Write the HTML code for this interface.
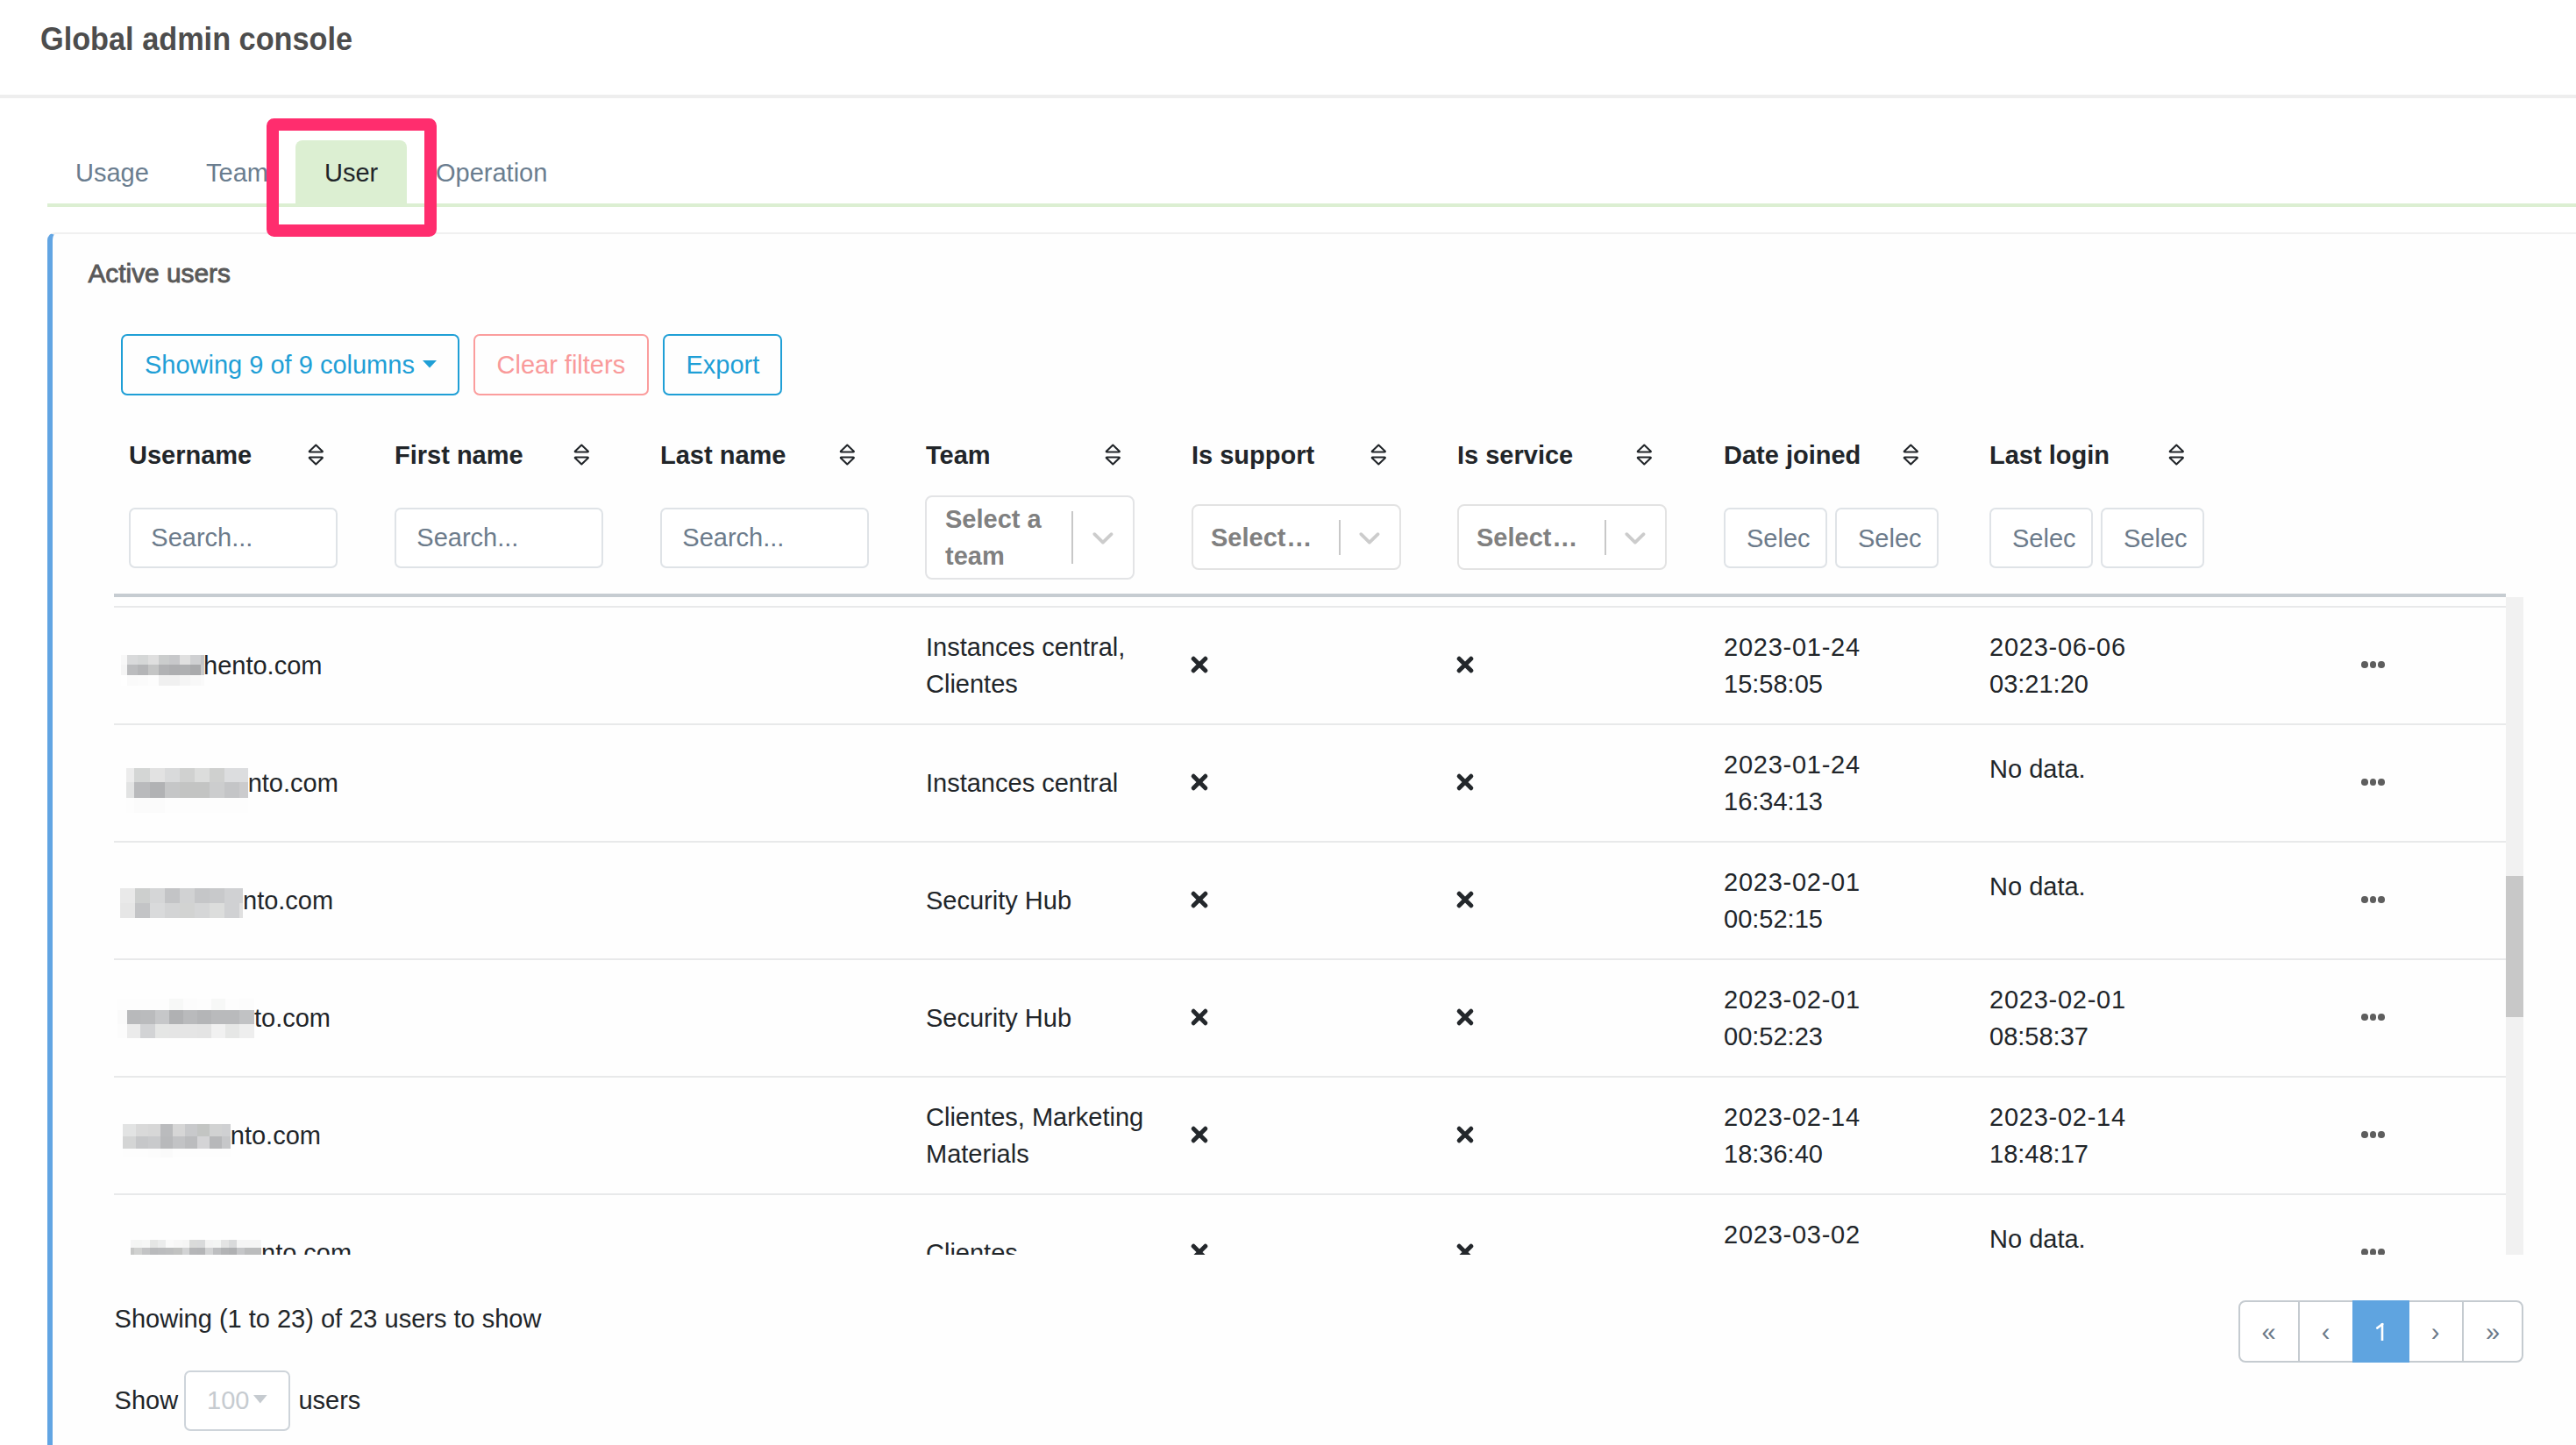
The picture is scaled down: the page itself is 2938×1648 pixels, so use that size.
<!DOCTYPE html>
<html><head><meta charset="utf-8"><title>Global admin console</title>
<style>
html,body{margin:0;padding:0;background:#ffffff;}
body{width:2938px;height:1648px;position:relative;overflow:hidden;font-family:"Liberation Sans", sans-serif;}
.t{position:absolute;white-space:nowrap;}
.r{position:absolute;}
</style></head><body>
<div class="t" style="left:46px;top:21.96px;font-size:37.6px;line-height:44px;color:#4d4d4d;font-weight:700;transform:scaleX(0.912);transform-origin:0 0">Global admin console</div>
<div class="r" style="left:0px;top:108px;width:2938px;height:4px;background:#eeeeee"></div>
<div class="r" style="left:337px;top:160px;width:127px;height:73px;background:#dcefd2;border-radius:8px 8px 0 0"></div>
<div class="r" style="left:54px;top:232px;width:2884px;height:4px;background:#dcefd2"></div>
<div class="t" style="left:86px;top:176.15px;font-size:29px;line-height:42px;color:#6a7d8f;font-weight:400;">Usage</div>
<div class="t" style="left:235px;top:176.15px;font-size:29px;line-height:42px;color:#6a7d8f;font-weight:400;">Team</div>
<div class="t" style="left:370px;top:176.15px;font-size:29px;line-height:42px;color:#212529;font-weight:400;">User</div>
<div class="t" style="left:497px;top:176.15px;font-size:29px;line-height:42px;color:#6a7d8f;font-weight:400;">Operation</div>
<div class="r" style="left:54px;top:265px;width:2884px;height:1383px;background:#fefefe;border-top:2px solid #f0f0f0;border-left:6px solid #62a5e3;border-top-left-radius:9px;box-sizing:border-box"></div>
<div class="t" style="left:100.5px;top:289.57px;font-size:29.8px;line-height:43px;color:#595959;font-weight:400;-webkit-text-stroke:0.9px #595959">Active users</div>
<div class="r" style="left:138px;top:381px;width:386px;height:70px;border:2px solid #1f9fd6;border-radius:7px;box-sizing:border-box"></div>
<div class="t" style="left:165px;top:395.15px;font-size:29px;line-height:42px;color:#1f9fd6;font-weight:400;">Showing 9 of 9 columns</div>
<svg class="r" style="left:482px;top:410.5px" width="16" height="9"><polygon points="0,0 16,0 8,8.5" fill="#1f9fd6"/></svg>
<div class="r" style="left:540px;top:381px;width:199.5px;height:70px;border:2px solid #fb9d9d;border-radius:7px;box-sizing:border-box"></div>
<div class="t" style="left:566.5px;top:395.15px;font-size:29px;line-height:42px;color:#f99a9a;font-weight:400;">Clear filters</div>
<div class="r" style="left:756px;top:381px;width:136px;height:70px;border:2px solid #1f9fd6;border-radius:7px;box-sizing:border-box"></div>
<div class="t" style="left:782.5px;top:395.15px;font-size:29px;line-height:42px;color:#1f9fd6;font-weight:400;">Export</div>
<div class="t" style="left:147px;top:498.45px;font-size:29px;line-height:42px;color:#212529;font-weight:700;">Username</div>
<svg class="r" style="left:351px;top:505px" width="20" height="26" viewBox="0 0 20 26"><path d="M9.3,2.6 L2.0,9.4 Q1.3,10.5 2.6,10.5 L16.0,10.5 Q17.3,10.5 16.6,9.4 Z" fill="none" stroke="#212529" stroke-width="2.1" stroke-linejoin="round"/><path d="M9.3,24.4 L2.0,17.6 Q1.3,16.5 2.6,16.5 L16.0,16.5 Q17.3,16.5 16.6,17.6 Z" fill="none" stroke="#212529" stroke-width="2.1" stroke-linejoin="round"/></svg>
<div class="t" style="left:450px;top:498.45px;font-size:29px;line-height:42px;color:#212529;font-weight:700;">First name</div>
<svg class="r" style="left:654px;top:505px" width="20" height="26" viewBox="0 0 20 26"><path d="M9.3,2.6 L2.0,9.4 Q1.3,10.5 2.6,10.5 L16.0,10.5 Q17.3,10.5 16.6,9.4 Z" fill="none" stroke="#212529" stroke-width="2.1" stroke-linejoin="round"/><path d="M9.3,24.4 L2.0,17.6 Q1.3,16.5 2.6,16.5 L16.0,16.5 Q17.3,16.5 16.6,17.6 Z" fill="none" stroke="#212529" stroke-width="2.1" stroke-linejoin="round"/></svg>
<div class="t" style="left:753px;top:498.45px;font-size:29px;line-height:42px;color:#212529;font-weight:700;">Last name</div>
<svg class="r" style="left:957px;top:505px" width="20" height="26" viewBox="0 0 20 26"><path d="M9.3,2.6 L2.0,9.4 Q1.3,10.5 2.6,10.5 L16.0,10.5 Q17.3,10.5 16.6,9.4 Z" fill="none" stroke="#212529" stroke-width="2.1" stroke-linejoin="round"/><path d="M9.3,24.4 L2.0,17.6 Q1.3,16.5 2.6,16.5 L16.0,16.5 Q17.3,16.5 16.6,17.6 Z" fill="none" stroke="#212529" stroke-width="2.1" stroke-linejoin="round"/></svg>
<div class="t" style="left:1056px;top:498.45px;font-size:29px;line-height:42px;color:#212529;font-weight:700;">Team</div>
<svg class="r" style="left:1260px;top:505px" width="20" height="26" viewBox="0 0 20 26"><path d="M9.3,2.6 L2.0,9.4 Q1.3,10.5 2.6,10.5 L16.0,10.5 Q17.3,10.5 16.6,9.4 Z" fill="none" stroke="#212529" stroke-width="2.1" stroke-linejoin="round"/><path d="M9.3,24.4 L2.0,17.6 Q1.3,16.5 2.6,16.5 L16.0,16.5 Q17.3,16.5 16.6,17.6 Z" fill="none" stroke="#212529" stroke-width="2.1" stroke-linejoin="round"/></svg>
<div class="t" style="left:1359px;top:498.45px;font-size:29px;line-height:42px;color:#212529;font-weight:700;">Is support</div>
<svg class="r" style="left:1563px;top:505px" width="20" height="26" viewBox="0 0 20 26"><path d="M9.3,2.6 L2.0,9.4 Q1.3,10.5 2.6,10.5 L16.0,10.5 Q17.3,10.5 16.6,9.4 Z" fill="none" stroke="#212529" stroke-width="2.1" stroke-linejoin="round"/><path d="M9.3,24.4 L2.0,17.6 Q1.3,16.5 2.6,16.5 L16.0,16.5 Q17.3,16.5 16.6,17.6 Z" fill="none" stroke="#212529" stroke-width="2.1" stroke-linejoin="round"/></svg>
<div class="t" style="left:1662px;top:498.45px;font-size:29px;line-height:42px;color:#212529;font-weight:700;">Is service</div>
<svg class="r" style="left:1866px;top:505px" width="20" height="26" viewBox="0 0 20 26"><path d="M9.3,2.6 L2.0,9.4 Q1.3,10.5 2.6,10.5 L16.0,10.5 Q17.3,10.5 16.6,9.4 Z" fill="none" stroke="#212529" stroke-width="2.1" stroke-linejoin="round"/><path d="M9.3,24.4 L2.0,17.6 Q1.3,16.5 2.6,16.5 L16.0,16.5 Q17.3,16.5 16.6,17.6 Z" fill="none" stroke="#212529" stroke-width="2.1" stroke-linejoin="round"/></svg>
<div class="t" style="left:1966px;top:498.45px;font-size:29px;line-height:42px;color:#212529;font-weight:700;">Date joined</div>
<svg class="r" style="left:2170px;top:505px" width="20" height="26" viewBox="0 0 20 26"><path d="M9.3,2.6 L2.0,9.4 Q1.3,10.5 2.6,10.5 L16.0,10.5 Q17.3,10.5 16.6,9.4 Z" fill="none" stroke="#212529" stroke-width="2.1" stroke-linejoin="round"/><path d="M9.3,24.4 L2.0,17.6 Q1.3,16.5 2.6,16.5 L16.0,16.5 Q17.3,16.5 16.6,17.6 Z" fill="none" stroke="#212529" stroke-width="2.1" stroke-linejoin="round"/></svg>
<div class="t" style="left:2269px;top:498.45px;font-size:29px;line-height:42px;color:#212529;font-weight:700;">Last login</div>
<svg class="r" style="left:2473px;top:505px" width="20" height="26" viewBox="0 0 20 26"><path d="M9.3,2.6 L2.0,9.4 Q1.3,10.5 2.6,10.5 L16.0,10.5 Q17.3,10.5 16.6,9.4 Z" fill="none" stroke="#212529" stroke-width="2.1" stroke-linejoin="round"/><path d="M9.3,24.4 L2.0,17.6 Q1.3,16.5 2.6,16.5 L16.0,16.5 Q17.3,16.5 16.6,17.6 Z" fill="none" stroke="#212529" stroke-width="2.1" stroke-linejoin="round"/></svg>
<div class="r" style="left:146.5px;top:578.5px;width:238.5px;height:69.5px;border:2px solid #dfe3e7;border-radius:7px;box-sizing:border-box;background:#fff"></div>
<div class="t" style="left:172.3px;top:592.05px;font-size:29px;line-height:42px;color:#6c7b8b;font-weight:400;">Search...</div>
<div class="r" style="left:449.5px;top:578.5px;width:238.5px;height:69.5px;border:2px solid #dfe3e7;border-radius:7px;box-sizing:border-box;background:#fff"></div>
<div class="t" style="left:475.3px;top:592.05px;font-size:29px;line-height:42px;color:#6c7b8b;font-weight:400;">Search...</div>
<div class="r" style="left:752.5px;top:578.5px;width:238.5px;height:69.5px;border:2px solid #dfe3e7;border-radius:7px;box-sizing:border-box;background:#fff"></div>
<div class="t" style="left:778.3px;top:592.05px;font-size:29px;line-height:42px;color:#6c7b8b;font-weight:400;">Search...</div>
<div class="r" style="left:1055px;top:565px;width:239px;height:96px;border:2px solid #e3e4e6;border-radius:8px;box-sizing:border-box;background:#fff"></div>
<div class="t" style="left:1078px;top:570.65px;font-size:29px;line-height:42px;color:#808080;font-weight:700;">Select a</div>
<div class="t" style="left:1078px;top:612.95px;font-size:29px;line-height:42px;color:#808080;font-weight:700;">team</div>
<div class="r" style="left:1222px;top:583px;width:2px;height:60px;background:#c8c8c8"></div>
<svg class="r" style="left:1245px;top:606px" width="26" height="16" viewBox="0 0 26 16"><polyline points="3.3,3.2 12.9,12.6 22.6,3.2" fill="none" stroke="#cccccc" stroke-width="3.8" stroke-linecap="round" stroke-linejoin="round"/></svg>
<div class="r" style="left:1359px;top:575px;width:239px;height:75px;border:2px solid #e3e3e3;border-radius:8px;box-sizing:border-box;background:#fff"></div>
<div class="t" style="left:1381px;top:592.25px;font-size:29px;line-height:42px;color:#808080;font-weight:700;">Select<span style="letter-spacing:1.2px;margin-left:2px">...</span></div>
<div class="r" style="left:1526.5px;top:593px;width:2px;height:40px;background:#c8c8c8"></div>
<svg class="r" style="left:1549px;top:606px" width="26" height="16" viewBox="0 0 26 16"><polyline points="3.3,3.2 12.9,12.6 22.6,3.2" fill="none" stroke="#cccccc" stroke-width="3.8" stroke-linecap="round" stroke-linejoin="round"/></svg>
<div class="r" style="left:1662px;top:575px;width:239px;height:75px;border:2px solid #e3e3e3;border-radius:8px;box-sizing:border-box;background:#fff"></div>
<div class="t" style="left:1684px;top:592.25px;font-size:29px;line-height:42px;color:#808080;font-weight:700;">Select<span style="letter-spacing:1.2px;margin-left:2px">...</span></div>
<div class="r" style="left:1829.5px;top:593px;width:2px;height:40px;background:#c8c8c8"></div>
<svg class="r" style="left:1852px;top:606px" width="26" height="16" viewBox="0 0 26 16"><polyline points="3.3,3.2 12.9,12.6 22.6,3.2" fill="none" stroke="#cccccc" stroke-width="3.8" stroke-linecap="round" stroke-linejoin="round"/></svg>
<div class="r" style="left:1965.5px;top:579px;width:118.5px;height:68.5px;border:2px solid #dfe3e7;border-radius:7px;box-sizing:border-box;background:#fff"></div>
<div class="t" style="left:1992px;top:592.55px;font-size:29px;line-height:42px;color:#6c7b8b;font-weight:400;">Selec</div>
<div class="r" style="left:2092.5px;top:579px;width:118.5px;height:68.5px;border:2px solid #dfe3e7;border-radius:7px;box-sizing:border-box;background:#fff"></div>
<div class="t" style="left:2119px;top:592.55px;font-size:29px;line-height:42px;color:#6c7b8b;font-weight:400;">Selec</div>
<div class="r" style="left:2268.5px;top:579px;width:118.5px;height:68.5px;border:2px solid #dfe3e7;border-radius:7px;box-sizing:border-box;background:#fff"></div>
<div class="t" style="left:2295px;top:592.55px;font-size:29px;line-height:42px;color:#6c7b8b;font-weight:400;">Selec</div>
<div class="r" style="left:2395.5px;top:579px;width:118.5px;height:68.5px;border:2px solid #dfe3e7;border-radius:7px;box-sizing:border-box;background:#fff"></div>
<div class="t" style="left:2422px;top:592.55px;font-size:29px;line-height:42px;color:#6c7b8b;font-weight:400;">Selec</div>
<div class="r" style="left:130px;top:677px;width:2728px;height:4px;background:#c6ccd1"></div>
<div class="r" style="left:130px;top:681px;width:2748px;height:750px;overflow:hidden">
<div class="r" style="left:0px;top:10px;width:2728px;height:2px;background:#e8e9ea"></div>
<div class="r" style="left:0px;top:144px;width:2728px;height:2px;background:#e8e9ea"></div>
<div class="r" style="left:0px;top:278px;width:2728px;height:2px;background:#e8e9ea"></div>
<div class="r" style="left:0px;top:412px;width:2728px;height:2px;background:#e8e9ea"></div>
<div class="r" style="left:0px;top:546px;width:2728px;height:2px;background:#e8e9ea"></div>
<div class="r" style="left:0px;top:680px;width:2728px;height:2px;background:#e8e9ea"></div>
<div class="t" style="left:102px;top:56.95px;font-size:29px;line-height:42px;color:#212529;font-weight:400;letter-spacing:0px">hento.com</div>
<div class="r" style="left:8px;top:66px;width:6.8px;height:11.3px;background:#f8f8f8"></div>
<div class="r" style="left:14.5px;top:66px;width:12.49999999999999px;height:11.3px;background:#d9dadb"></div>
<div class="r" style="left:26.69999999999999px;top:66px;width:12.3px;height:11.3px;background:#d5d7d7"></div>
<div class="r" style="left:38.69999999999999px;top:66px;width:12.3px;height:11.3px;background:#dfdfdf"></div>
<div class="r" style="left:50.69999999999999px;top:66px;width:12.200000000000006px;height:11.3px;background:#cbcdcd"></div>
<div class="r" style="left:62.599999999999994px;top:66px;width:12.3px;height:11.3px;background:#c7c8ca"></div>
<div class="r" style="left:74.6px;top:66px;width:12.200000000000006px;height:11.3px;background:#e0e0e0"></div>
<div class="r" style="left:86.5px;top:66px;width:12.8px;height:11.3px;background:#cfd0d2"></div>
<div class="r" style="left:99px;top:66px;width:4.3px;height:11.3px;background:#c4c5c7"></div>
<div class="r" style="left:8px;top:77px;width:6.8px;height:12.3px;background:#f5f5f5"></div>
<div class="r" style="left:14.5px;top:77px;width:12.49999999999999px;height:12.3px;background:#bbbcbe"></div>
<div class="r" style="left:26.69999999999999px;top:77px;width:12.3px;height:12.3px;background:#b4b5b7"></div>
<div class="r" style="left:38.69999999999999px;top:77px;width:12.3px;height:12.3px;background:#c4c5c5"></div>
<div class="r" style="left:50.69999999999999px;top:77px;width:12.200000000000006px;height:12.3px;background:#b1b2b4"></div>
<div class="r" style="left:62.599999999999994px;top:77px;width:12.3px;height:12.3px;background:#adaeb0"></div>
<div class="r" style="left:74.6px;top:77px;width:12.200000000000006px;height:12.3px;background:#afb0b2"></div>
<div class="r" style="left:86.5px;top:77px;width:12.8px;height:12.3px;background:#a9aaac"></div>
<div class="r" style="left:99px;top:77px;width:4.3px;height:12.3px;background:#c8c9cb"></div>
<div class="r" style="left:8px;top:89px;width:6.8px;height:12.3px;background:#ffffff"></div>
<div class="r" style="left:14.5px;top:89px;width:12.49999999999999px;height:12.3px;background:#fafafa"></div>
<div class="r" style="left:26.69999999999999px;top:89px;width:12.3px;height:12.3px;background:#fbfbfb"></div>
<div class="r" style="left:38.69999999999999px;top:89px;width:12.3px;height:12.3px;background:#fdfdfd"></div>
<div class="r" style="left:50.69999999999999px;top:89px;width:12.200000000000006px;height:12.3px;background:#f0f0f0"></div>
<div class="r" style="left:62.599999999999994px;top:89px;width:12.3px;height:12.3px;background:#f0f0f0"></div>
<div class="r" style="left:74.6px;top:89px;width:12.200000000000006px;height:12.3px;background:#f5f5f5"></div>
<div class="r" style="left:86.5px;top:89px;width:12.8px;height:12.3px;background:#f8f8f8"></div>
<div class="r" style="left:99px;top:89px;width:4.3px;height:12.3px;background:#fafafa"></div>
<div class="t" style="left:926px;top:35.95px;font-size:29px;line-height:42px;color:#212529;font-weight:400;letter-spacing:0px">Instances central,</div>
<div class="t" style="left:926px;top:77.95px;font-size:29px;line-height:42px;color:#212529;font-weight:400;letter-spacing:0px">Clientes</div>
<svg class="r" style="left:1226.3px;top:65px" width="24" height="24"><path d="M5.2,5.2 L18.8,18.8 M18.8,5.2 L5.2,18.8" stroke="#23272b" stroke-width="5" stroke-linecap="round"/></svg>
<svg class="r" style="left:1529.3px;top:65px" width="24" height="24"><path d="M5.2,5.2 L18.8,18.8 M18.8,5.2 L5.2,18.8" stroke="#23272b" stroke-width="5" stroke-linecap="round"/></svg>
<div class="t" style="left:1836px;top:35.95px;font-size:29px;line-height:42px;color:#212529;font-weight:400;letter-spacing:0.75px">2023-01-24</div>
<div class="t" style="left:1836px;top:77.95px;font-size:29px;line-height:42px;color:#212529;font-weight:400;letter-spacing:0px">15:58:05</div>
<div class="t" style="left:2139px;top:35.95px;font-size:29px;line-height:42px;color:#212529;font-weight:400;letter-spacing:0.75px">2023-06-06</div>
<div class="t" style="left:2139px;top:77.95px;font-size:29px;line-height:42px;color:#212529;font-weight:400;letter-spacing:0px">03:21:20</div>
<div class="r" style="left:2563.2px;top:73.40000000000005px;width:7.6px;height:7.6px;border-radius:50%;background:#5e5e5e"></div>
<div class="r" style="left:2572.7999999999997px;top:73.40000000000005px;width:7.6px;height:7.6px;border-radius:50%;background:#5e5e5e"></div>
<div class="r" style="left:2582.3999999999996px;top:73.40000000000005px;width:7.6px;height:7.6px;border-radius:50%;background:#5e5e5e"></div>
<div class="t" style="left:152.7px;top:190.95px;font-size:29px;line-height:42px;color:#212529;font-weight:400;letter-spacing:0px">nto.com</div>
<div class="r" style="left:14.099999999999994px;top:194.5px;width:9.399999999999995px;height:17.099999999999955px;background:#ececec"></div>
<div class="r" style="left:23.19999999999999px;top:194.5px;width:18.000000000000018px;height:17.099999999999955px;background:#d4d6d5"></div>
<div class="r" style="left:40.900000000000006px;top:194.5px;width:17.3px;height:17.099999999999955px;background:#e2e2e2"></div>
<div class="r" style="left:57.900000000000006px;top:194.5px;width:17.399999999999995px;height:17.099999999999955px;background:#d9dadb"></div>
<div class="r" style="left:75px;top:194.5px;width:17.3px;height:17.099999999999955px;background:#d0d1d0"></div>
<div class="r" style="left:92px;top:194.5px;width:17.3px;height:17.099999999999955px;background:#dcdddc"></div>
<div class="r" style="left:109px;top:194.5px;width:17.200000000000006px;height:17.099999999999955px;background:#cfd0cf"></div>
<div class="r" style="left:125.9px;top:194.5px;width:17.700000000000006px;height:17.099999999999955px;background:#dcdddf"></div>
<div class="r" style="left:143.3px;top:194.5px;width:9.99999999999999px;height:17.099999999999955px;background:#dcdddf"></div>
<div class="r" style="left:14.099999999999994px;top:211.29999999999995px;width:9.399999999999995px;height:17.8px;background:#e2e3e3"></div>
<div class="r" style="left:23.19999999999999px;top:211.29999999999995px;width:18.000000000000018px;height:17.8px;background:#b9babc"></div>
<div class="r" style="left:40.900000000000006px;top:211.29999999999995px;width:17.3px;height:17.8px;background:#b1b2b4"></div>
<div class="r" style="left:57.900000000000006px;top:211.29999999999995px;width:17.399999999999995px;height:17.8px;background:#c5c6c7"></div>
<div class="r" style="left:75px;top:211.29999999999995px;width:17.3px;height:17.8px;background:#c3c4c3"></div>
<div class="r" style="left:92px;top:211.29999999999995px;width:17.3px;height:17.8px;background:#c3c4c3"></div>
<div class="r" style="left:109px;top:211.29999999999995px;width:17.200000000000006px;height:17.8px;background:#cccdce"></div>
<div class="r" style="left:125.9px;top:211.29999999999995px;width:17.700000000000006px;height:17.8px;background:#c4c5c7"></div>
<div class="r" style="left:143.3px;top:211.29999999999995px;width:9.99999999999999px;height:17.8px;background:#cbcbcd"></div>
<div class="r" style="left:14.099999999999994px;top:228.79999999999995px;width:9.399999999999995px;height:17.3px;background:#fdfdfd"></div>
<div class="r" style="left:23.19999999999999px;top:228.79999999999995px;width:18.000000000000018px;height:17.3px;background:#fbfbfb"></div>
<div class="r" style="left:40.900000000000006px;top:228.79999999999995px;width:17.3px;height:17.3px;background:#fbfbfb"></div>
<div class="r" style="left:57.900000000000006px;top:228.79999999999995px;width:17.399999999999995px;height:17.3px;background:#fdfdfd"></div>
<div class="r" style="left:75px;top:228.79999999999995px;width:17.3px;height:17.3px;background:#fdfdfd"></div>
<div class="r" style="left:92px;top:228.79999999999995px;width:17.3px;height:17.3px;background:#fdfdfd"></div>
<div class="r" style="left:109px;top:228.79999999999995px;width:17.200000000000006px;height:17.3px;background:#fdfdfd"></div>
<div class="r" style="left:125.9px;top:228.79999999999995px;width:17.700000000000006px;height:17.3px;background:#fdfdfd"></div>
<div class="r" style="left:143.3px;top:228.79999999999995px;width:9.99999999999999px;height:17.3px;background:#fdfdfd"></div>
<div class="t" style="left:926px;top:190.95px;font-size:29px;line-height:42px;color:#212529;font-weight:400;letter-spacing:0px">Instances central</div>
<svg class="r" style="left:1226.3px;top:199px" width="24" height="24"><path d="M5.2,5.2 L18.8,18.8 M18.8,5.2 L5.2,18.8" stroke="#23272b" stroke-width="5" stroke-linecap="round"/></svg>
<svg class="r" style="left:1529.3px;top:199px" width="24" height="24"><path d="M5.2,5.2 L18.8,18.8 M18.8,5.2 L5.2,18.8" stroke="#23272b" stroke-width="5" stroke-linecap="round"/></svg>
<div class="t" style="left:1836px;top:169.95px;font-size:29px;line-height:42px;color:#212529;font-weight:400;letter-spacing:0.75px">2023-01-24</div>
<div class="t" style="left:1836px;top:211.95px;font-size:29px;line-height:42px;color:#212529;font-weight:400;letter-spacing:0px">16:34:13</div>
<div class="t" style="left:2139px;top:175.35px;font-size:29px;line-height:42px;color:#212529;font-weight:400;letter-spacing:0px">No data.</div>
<div class="r" style="left:2563.2px;top:207.40000000000003px;width:7.6px;height:7.6px;border-radius:50%;background:#5e5e5e"></div>
<div class="r" style="left:2572.7999999999997px;top:207.40000000000003px;width:7.6px;height:7.6px;border-radius:50%;background:#5e5e5e"></div>
<div class="r" style="left:2582.3999999999996px;top:207.40000000000003px;width:7.6px;height:7.6px;border-radius:50%;background:#5e5e5e"></div>
<div class="t" style="left:147px;top:324.95px;font-size:29px;line-height:42px;color:#212529;font-weight:400;letter-spacing:0px">nto.com</div>
<div class="r" style="left:6.5px;top:332px;width:17.49999999999999px;height:17.099999999999955px;background:#e9e9e9"></div>
<div class="r" style="left:23.69999999999999px;top:332px;width:17.500000000000018px;height:17.099999999999955px;background:#cdcfce"></div>
<div class="r" style="left:40.900000000000006px;top:332px;width:17.3px;height:17.099999999999955px;background:#d5d6d7"></div>
<div class="r" style="left:57.900000000000006px;top:332px;width:17.399999999999995px;height:17.099999999999955px;background:#c3c4c6"></div>
<div class="r" style="left:75px;top:332px;width:17.3px;height:17.099999999999955px;background:#d1d2d3"></div>
<div class="r" style="left:92px;top:332px;width:17.3px;height:17.099999999999955px;background:#c5c6c8"></div>
<div class="r" style="left:109px;top:332px;width:17.200000000000006px;height:17.099999999999955px;background:#c8c9cb"></div>
<div class="r" style="left:125.9px;top:332px;width:17.700000000000006px;height:17.099999999999955px;background:#d0d1d3"></div>
<div class="r" style="left:143.3px;top:332px;width:3.8px;height:17.099999999999955px;background:#d0d1d3"></div>
<div class="r" style="left:6.5px;top:348.79999999999995px;width:17.49999999999999px;height:17.500000000000046px;background:#e6e6e6"></div>
<div class="r" style="left:23.69999999999999px;top:348.79999999999995px;width:17.500000000000018px;height:17.500000000000046px;background:#c3c4c6"></div>
<div class="r" style="left:40.900000000000006px;top:348.79999999999995px;width:17.3px;height:17.500000000000046px;background:#d9dadb"></div>
<div class="r" style="left:57.900000000000006px;top:348.79999999999995px;width:17.399999999999995px;height:17.500000000000046px;background:#d3d4d5"></div>
<div class="r" style="left:75px;top:348.79999999999995px;width:17.3px;height:17.500000000000046px;background:#d2d3d2"></div>
<div class="r" style="left:92px;top:348.79999999999995px;width:17.3px;height:17.500000000000046px;background:#d5d6d7"></div>
<div class="r" style="left:109px;top:348.79999999999995px;width:17.200000000000006px;height:17.500000000000046px;background:#dcdddc"></div>
<div class="r" style="left:125.9px;top:348.79999999999995px;width:17.700000000000006px;height:17.500000000000046px;background:#d0d1d3"></div>
<div class="r" style="left:143.3px;top:348.79999999999995px;width:3.8px;height:17.500000000000046px;background:#e0e0e0"></div>
<div class="t" style="left:926px;top:324.95px;font-size:29px;line-height:42px;color:#212529;font-weight:400;letter-spacing:0px">Security Hub</div>
<svg class="r" style="left:1226.3px;top:333px" width="24" height="24"><path d="M5.2,5.2 L18.8,18.8 M18.8,5.2 L5.2,18.8" stroke="#23272b" stroke-width="5" stroke-linecap="round"/></svg>
<svg class="r" style="left:1529.3px;top:333px" width="24" height="24"><path d="M5.2,5.2 L18.8,18.8 M18.8,5.2 L5.2,18.8" stroke="#23272b" stroke-width="5" stroke-linecap="round"/></svg>
<div class="t" style="left:1836px;top:303.95px;font-size:29px;line-height:42px;color:#212529;font-weight:400;letter-spacing:0.75px">2023-02-01</div>
<div class="t" style="left:1836px;top:345.95px;font-size:29px;line-height:42px;color:#212529;font-weight:400;letter-spacing:0px">00:52:15</div>
<div class="t" style="left:2139px;top:309.35px;font-size:29px;line-height:42px;color:#212529;font-weight:400;letter-spacing:0px">No data.</div>
<div class="r" style="left:2563.2px;top:341.40000000000003px;width:7.6px;height:7.6px;border-radius:50%;background:#5e5e5e"></div>
<div class="r" style="left:2572.7999999999997px;top:341.40000000000003px;width:7.6px;height:7.6px;border-radius:50%;background:#5e5e5e"></div>
<div class="r" style="left:2582.3999999999996px;top:341.40000000000003px;width:7.6px;height:7.6px;border-radius:50%;background:#5e5e5e"></div>
<div class="t" style="left:160px;top:458.95px;font-size:29px;line-height:42px;color:#212529;font-weight:400;letter-spacing:0px">to.com</div>
<div class="r" style="left:4.099999999999994px;top:458.20000000000005px;width:10.700000000000006px;height:12.8px;background:#fdfdfd"></div>
<div class="r" style="left:14.5px;top:458.20000000000005px;width:15.99999999999999px;height:12.8px;background:#fdfdfd"></div>
<div class="r" style="left:30.19999999999999px;top:458.20000000000005px;width:16.600000000000012px;height:12.8px;background:#fdfdfd"></div>
<div class="r" style="left:46.5px;top:458.20000000000005px;width:16.399999999999995px;height:12.8px;background:#fdfdfd"></div>
<div class="r" style="left:62.599999999999994px;top:458.20000000000005px;width:16.3px;height:12.8px;background:#f7f8f7"></div>
<div class="r" style="left:78.6px;top:458.20000000000005px;width:16.600000000000012px;height:12.8px;background:#fcfcfc"></div>
<div class="r" style="left:94.9px;top:458.20000000000005px;width:16.099999999999984px;height:12.8px;background:#fdfdfd"></div>
<div class="r" style="left:110.69999999999999px;top:458.20000000000005px;width:16.600000000000012px;height:12.8px;background:#f7f8f7"></div>
<div class="r" style="left:127px;top:458.20000000000005px;width:16.3px;height:12.8px;background:#fdfdfd"></div>
<div class="r" style="left:143px;top:458.20000000000005px;width:17.199999999999978px;height:12.8px;background:#fcfcfc"></div>
<div class="r" style="left:4.099999999999994px;top:470.70000000000005px;width:10.700000000000006px;height:16.599999999999955px;background:#fafafa"></div>
<div class="r" style="left:14.5px;top:470.70000000000005px;width:15.99999999999999px;height:16.599999999999955px;background:#b8b9bb"></div>
<div class="r" style="left:30.19999999999999px;top:470.70000000000005px;width:16.600000000000012px;height:16.599999999999955px;background:#babbbd"></div>
<div class="r" style="left:46.5px;top:470.70000000000005px;width:16.399999999999995px;height:16.599999999999955px;background:#c6c7c9"></div>
<div class="r" style="left:62.599999999999994px;top:470.70000000000005px;width:16.3px;height:16.599999999999955px;background:#b0b1b3"></div>
<div class="r" style="left:78.6px;top:470.70000000000005px;width:16.600000000000012px;height:16.599999999999955px;background:#b9babc"></div>
<div class="r" style="left:94.9px;top:470.70000000000005px;width:16.099999999999984px;height:16.599999999999955px;background:#b4b5b7"></div>
<div class="r" style="left:110.69999999999999px;top:470.70000000000005px;width:16.600000000000012px;height:16.599999999999955px;background:#b9babc"></div>
<div class="r" style="left:127px;top:470.70000000000005px;width:16.3px;height:16.599999999999955px;background:#b9babc"></div>
<div class="r" style="left:143px;top:470.70000000000005px;width:17.199999999999978px;height:16.599999999999955px;background:#c1c2c4"></div>
<div class="r" style="left:4.099999999999994px;top:487px;width:10.700000000000006px;height:16.099999999999955px;background:#fcfcfc"></div>
<div class="r" style="left:14.5px;top:487px;width:15.99999999999999px;height:16.099999999999955px;background:#ebebeb"></div>
<div class="r" style="left:30.19999999999999px;top:487px;width:16.600000000000012px;height:16.099999999999955px;background:#d2d3d5"></div>
<div class="r" style="left:46.5px;top:487px;width:16.399999999999995px;height:16.099999999999955px;background:#e5e6e5"></div>
<div class="r" style="left:62.599999999999994px;top:487px;width:16.3px;height:16.099999999999955px;background:#e5e5e5"></div>
<div class="r" style="left:78.6px;top:487px;width:16.600000000000012px;height:16.099999999999955px;background:#e5e5e5"></div>
<div class="r" style="left:94.9px;top:487px;width:16.099999999999984px;height:16.099999999999955px;background:#e4e4e4"></div>
<div class="r" style="left:110.69999999999999px;top:487px;width:16.600000000000012px;height:16.099999999999955px;background:#f1f1f1"></div>
<div class="r" style="left:127px;top:487px;width:16.3px;height:16.099999999999955px;background:#e6e7e6"></div>
<div class="r" style="left:143px;top:487px;width:17.199999999999978px;height:16.099999999999955px;background:#eeeeee"></div>
<div class="t" style="left:926px;top:458.95px;font-size:29px;line-height:42px;color:#212529;font-weight:400;letter-spacing:0px">Security Hub</div>
<svg class="r" style="left:1226.3px;top:467px" width="24" height="24"><path d="M5.2,5.2 L18.8,18.8 M18.8,5.2 L5.2,18.8" stroke="#23272b" stroke-width="5" stroke-linecap="round"/></svg>
<svg class="r" style="left:1529.3px;top:467px" width="24" height="24"><path d="M5.2,5.2 L18.8,18.8 M18.8,5.2 L5.2,18.8" stroke="#23272b" stroke-width="5" stroke-linecap="round"/></svg>
<div class="t" style="left:1836px;top:437.95px;font-size:29px;line-height:42px;color:#212529;font-weight:400;letter-spacing:0.75px">2023-02-01</div>
<div class="t" style="left:1836px;top:479.95px;font-size:29px;line-height:42px;color:#212529;font-weight:400;letter-spacing:0px">00:52:23</div>
<div class="t" style="left:2139px;top:437.95px;font-size:29px;line-height:42px;color:#212529;font-weight:400;letter-spacing:0.75px">2023-02-01</div>
<div class="t" style="left:2139px;top:479.95px;font-size:29px;line-height:42px;color:#212529;font-weight:400;letter-spacing:0px">08:58:37</div>
<div class="r" style="left:2563.2px;top:475.40000000000003px;width:7.6px;height:7.6px;border-radius:50%;background:#5e5e5e"></div>
<div class="r" style="left:2572.7999999999997px;top:475.40000000000003px;width:7.6px;height:7.6px;border-radius:50%;background:#5e5e5e"></div>
<div class="r" style="left:2582.3999999999996px;top:475.40000000000003px;width:7.6px;height:7.6px;border-radius:50%;background:#5e5e5e"></div>
<div class="t" style="left:132.8px;top:592.95px;font-size:29px;line-height:42px;color:#212529;font-weight:400;letter-spacing:0px">nto.com</div>
<div class="r" style="left:10.400000000000006px;top:601px;width:14.700000000000006px;height:14.3px;background:#e2e3e3"></div>
<div class="r" style="left:24.80000000000001px;top:601px;width:14.199999999999978px;height:14.3px;background:#d9d9d9"></div>
<div class="r" style="left:38.69999999999999px;top:601px;width:14.100000000000012px;height:14.3px;background:#d7d7d7"></div>
<div class="r" style="left:52.5px;top:601px;width:14.8px;height:14.3px;background:#babbbd"></div>
<div class="r" style="left:67px;top:601px;width:14.3px;height:14.3px;background:#d6d6d6"></div>
<div class="r" style="left:81px;top:601px;width:14.200000000000006px;height:14.3px;background:#c8c9cb"></div>
<div class="r" style="left:94.9px;top:601px;width:14.399999999999995px;height:14.3px;background:#c3c5c3"></div>
<div class="r" style="left:109px;top:601px;width:14.100000000000012px;height:14.3px;background:#d1d2d2"></div>
<div class="r" style="left:122.80000000000001px;top:601px;width:10.49999999999999px;height:14.3px;background:#cfd0d2"></div>
<div class="r" style="left:10.400000000000006px;top:615px;width:14.700000000000006px;height:14.099999999999955px;background:#d4d5d5"></div>
<div class="r" style="left:24.80000000000001px;top:615px;width:14.199999999999978px;height:14.099999999999955px;background:#c6c7c9"></div>
<div class="r" style="left:38.69999999999999px;top:615px;width:14.100000000000012px;height:14.099999999999955px;background:#c9cacc"></div>
<div class="r" style="left:52.5px;top:615px;width:14.8px;height:14.099999999999955px;background:#b8b9bb"></div>
<div class="r" style="left:67px;top:615px;width:14.3px;height:14.099999999999955px;background:#c2c3c5"></div>
<div class="r" style="left:81px;top:615px;width:14.200000000000006px;height:14.099999999999955px;background:#bbbcbe"></div>
<div class="r" style="left:94.9px;top:615px;width:14.399999999999995px;height:14.099999999999955px;background:#d4d4d6"></div>
<div class="r" style="left:109px;top:615px;width:14.100000000000012px;height:14.099999999999955px;background:#b7b8ba"></div>
<div class="r" style="left:122.80000000000001px;top:615px;width:10.49999999999999px;height:14.099999999999955px;background:#c6c7c9"></div>
<div class="r" style="left:10.400000000000006px;top:628.8px;width:14.700000000000006px;height:10.500000000000046px;background:#fdfdfd"></div>
<div class="r" style="left:24.80000000000001px;top:628.8px;width:14.199999999999978px;height:10.500000000000046px;background:#fdfdfd"></div>
<div class="r" style="left:38.69999999999999px;top:628.8px;width:14.100000000000012px;height:10.500000000000046px;background:#fcfcfc"></div>
<div class="r" style="left:52.5px;top:628.8px;width:14.8px;height:10.500000000000046px;background:#fafafa"></div>
<div class="r" style="left:67px;top:628.8px;width:14.3px;height:10.500000000000046px;background:#fdfdfd"></div>
<div class="r" style="left:81px;top:628.8px;width:14.200000000000006px;height:10.500000000000046px;background:#fdfdfd"></div>
<div class="r" style="left:94.9px;top:628.8px;width:14.399999999999995px;height:10.500000000000046px;background:#fdfdfd"></div>
<div class="r" style="left:109px;top:628.8px;width:14.100000000000012px;height:10.500000000000046px;background:#fdfdfd"></div>
<div class="r" style="left:122.80000000000001px;top:628.8px;width:10.49999999999999px;height:10.500000000000046px;background:#fdfdfd"></div>
<div class="t" style="left:926px;top:571.95px;font-size:29px;line-height:42px;color:#212529;font-weight:400;letter-spacing:0px">Clientes, Marketing</div>
<div class="t" style="left:926px;top:613.95px;font-size:29px;line-height:42px;color:#212529;font-weight:400;letter-spacing:0px">Materials</div>
<svg class="r" style="left:1226.3px;top:601px" width="24" height="24"><path d="M5.2,5.2 L18.8,18.8 M18.8,5.2 L5.2,18.8" stroke="#23272b" stroke-width="5" stroke-linecap="round"/></svg>
<svg class="r" style="left:1529.3px;top:601px" width="24" height="24"><path d="M5.2,5.2 L18.8,18.8 M18.8,5.2 L5.2,18.8" stroke="#23272b" stroke-width="5" stroke-linecap="round"/></svg>
<div class="t" style="left:1836px;top:571.95px;font-size:29px;line-height:42px;color:#212529;font-weight:400;letter-spacing:0.75px">2023-02-14</div>
<div class="t" style="left:1836px;top:613.95px;font-size:29px;line-height:42px;color:#212529;font-weight:400;letter-spacing:0px">18:36:40</div>
<div class="t" style="left:2139px;top:571.95px;font-size:29px;line-height:42px;color:#212529;font-weight:400;letter-spacing:0.75px">2023-02-14</div>
<div class="t" style="left:2139px;top:613.95px;font-size:29px;line-height:42px;color:#212529;font-weight:400;letter-spacing:0px">18:48:17</div>
<div class="r" style="left:2563.2px;top:609.4000000000001px;width:7.6px;height:7.6px;border-radius:50%;background:#5e5e5e"></div>
<div class="r" style="left:2572.7999999999997px;top:609.4000000000001px;width:7.6px;height:7.6px;border-radius:50%;background:#5e5e5e"></div>
<div class="r" style="left:2582.3999999999996px;top:609.4000000000001px;width:7.6px;height:7.6px;border-radius:50%;background:#5e5e5e"></div>
<div class="t" style="left:168px;top:726.95px;font-size:29px;line-height:42px;color:#212529;font-weight:400;letter-spacing:0px">nto.com</div>
<div class="r" style="left:18.80000000000001px;top:733px;width:4.699999999999977px;height:9.3px;background:#f5f5f5"></div>
<div class="r" style="left:23.19999999999999px;top:733px;width:9.100000000000012px;height:9.3px;background:#f4f5f4"></div>
<div class="r" style="left:32px;top:733px;width:9.3px;height:9.3px;background:#f6f7f6"></div>
<div class="r" style="left:41px;top:733px;width:9.3px;height:9.3px;background:#e5e6e5"></div>
<div class="r" style="left:50px;top:733px;width:9.3px;height:9.3px;background:#ebecec"></div>
<div class="r" style="left:59px;top:733px;width:9.3px;height:9.3px;background:#fafafa"></div>
<div class="r" style="left:68px;top:733px;width:9.8px;height:9.3px;background:#f7f7f7"></div>
<div class="r" style="left:77.5px;top:733px;width:8.8px;height:9.3px;background:#f5f5f5"></div>
<div class="r" style="left:86px;top:733px;width:9.3px;height:9.3px;background:#dadbda"></div>
<div class="r" style="left:95px;top:733px;width:9.3px;height:9.3px;background:#d9dadb"></div>
<div class="r" style="left:104px;top:733px;width:9.3px;height:9.3px;background:#f3f3f3"></div>
<div class="r" style="left:113px;top:733px;width:9.3px;height:9.3px;background:#f4f5f4"></div>
<div class="r" style="left:122px;top:733px;width:9.3px;height:9.3px;background:#e4e4e4"></div>
<div class="r" style="left:131px;top:733px;width:9.3px;height:9.3px;background:#d9dadb"></div>
<div class="r" style="left:140px;top:733px;width:9.3px;height:9.3px;background:#f5f5f5"></div>
<div class="r" style="left:149px;top:733px;width:9.3px;height:9.3px;background:#f5f5f5"></div>
<div class="r" style="left:158px;top:733px;width:10.3px;height:9.3px;background:#f5f5f5"></div>
<div class="r" style="left:18.80000000000001px;top:742px;width:4.699999999999977px;height:9.3px;background:#c6c7c6"></div>
<div class="r" style="left:23.19999999999999px;top:742px;width:9.100000000000012px;height:9.3px;background:#d0d1d0"></div>
<div class="r" style="left:32px;top:742px;width:9.3px;height:9.3px;background:#c3c4c5"></div>
<div class="r" style="left:41px;top:742px;width:9.3px;height:9.3px;background:#b9babc"></div>
<div class="r" style="left:50px;top:742px;width:9.3px;height:9.3px;background:#bbbcbe"></div>
<div class="r" style="left:59px;top:742px;width:9.3px;height:9.3px;background:#bdbebf"></div>
<div class="r" style="left:68px;top:742px;width:9.8px;height:9.3px;background:#c1c2c1"></div>
<div class="r" style="left:77.5px;top:742px;width:8.8px;height:9.3px;background:#d2d3d4"></div>
<div class="r" style="left:86px;top:742px;width:9.3px;height:9.3px;background:#b5b6b8"></div>
<div class="r" style="left:95px;top:742px;width:9.3px;height:9.3px;background:#b4b5b7"></div>
<div class="r" style="left:104px;top:742px;width:9.3px;height:9.3px;background:#d2d3d4"></div>
<div class="r" style="left:113px;top:742px;width:9.3px;height:9.3px;background:#bdbec0"></div>
<div class="r" style="left:122px;top:742px;width:9.3px;height:9.3px;background:#b2b3b5"></div>
<div class="r" style="left:131px;top:742px;width:9.3px;height:9.3px;background:#afb0b2"></div>
<div class="r" style="left:140px;top:742px;width:9.3px;height:9.3px;background:#c5c6c8"></div>
<div class="r" style="left:149px;top:742px;width:9.3px;height:9.3px;background:#bbbcbd"></div>
<div class="r" style="left:158px;top:742px;width:10.3px;height:9.3px;background:#bbbcbd"></div>
<div class="t" style="left:926px;top:726.95px;font-size:29px;line-height:42px;color:#212529;font-weight:400;letter-spacing:0px">Clientes</div>
<svg class="r" style="left:1226.3px;top:735px" width="24" height="24"><path d="M5.2,5.2 L18.8,18.8 M18.8,5.2 L5.2,18.8" stroke="#23272b" stroke-width="5" stroke-linecap="round"/></svg>
<svg class="r" style="left:1529.3px;top:735px" width="24" height="24"><path d="M5.2,5.2 L18.8,18.8 M18.8,5.2 L5.2,18.8" stroke="#23272b" stroke-width="5" stroke-linecap="round"/></svg>
<div class="t" style="left:1836px;top:705.95px;font-size:29px;line-height:42px;color:#212529;font-weight:400;letter-spacing:0.75px">2023-03-02</div>
<div class="t" style="left:1836px;top:747.95px;font-size:29px;line-height:42px;color:#212529;font-weight:400;letter-spacing:0px">10:00:00</div>
<div class="t" style="left:2139px;top:711.35px;font-size:29px;line-height:42px;color:#212529;font-weight:400;letter-spacing:0px">No data.</div>
<div class="r" style="left:2563.2px;top:743.4000000000001px;width:7.6px;height:7.6px;border-radius:50%;background:#5e5e5e"></div>
<div class="r" style="left:2572.7999999999997px;top:743.4000000000001px;width:7.6px;height:7.6px;border-radius:50%;background:#5e5e5e"></div>
<div class="r" style="left:2582.3999999999996px;top:743.4000000000001px;width:7.6px;height:7.6px;border-radius:50%;background:#5e5e5e"></div>
<div class="r" style="left:2728px;top:0px;width:20px;height:750px;background:#f1f1f1"></div>
<div class="r" style="left:2728px;top:317.5px;width:20px;height:161.5px;background:#c8c8c8"></div>
</div>
<div class="t" style="left:130.6px;top:1482.95px;font-size:29px;line-height:42px;color:#212529;font-weight:400;">Showing (1 to 23) of 23 users to show</div>
<div class="t" style="left:130.6px;top:1575.95px;font-size:29px;line-height:42px;color:#212529;font-weight:400;">Show</div>
<div class="r" style="left:209.5px;top:1562.5px;width:121px;height:69px;border:2px solid #ced4da;border-radius:7px;box-sizing:border-box;background:#fff"></div>
<div class="t" style="left:236px;top:1575.95px;font-size:29px;line-height:42px;color:#c6cbd0;font-weight:400;">100</div>
<svg class="r" style="left:289px;top:1590.5px" width="16" height="10"><polygon points="0,0 15.6,0 7.8,9.5" fill="#c6cbd0"/></svg>
<div class="t" style="left:340.4px;top:1575.95px;font-size:29px;line-height:42px;color:#212529;font-weight:400;">users</div>
<div class="r" style="left:2553px;top:1483px;width:325px;height:71px;border:2px solid #c5cbd0;border-radius:8px;box-sizing:border-box;background:#fff"></div>
<div class="r" style="left:2621px;top:1483px;width:2px;height:71px;background:#c5cbd0"></div>
<div class="r" style="left:2808px;top:1483px;width:2px;height:71px;background:#c5cbd0"></div>
<div class="r" style="left:2683px;top:1483px;width:65px;height:71px;background:#5fa4e0"></div>
<div class="t" style="left:2547.5px;width:80px;text-align:center;top:1497.95px;font-size:29px;line-height:42px;color:#6c7a89">&laquo;</div>
<div class="t" style="left:2612.5px;width:80px;text-align:center;top:1497.95px;font-size:29px;line-height:42px;color:#6c7a89">&lsaquo;</div>
<svg class="r" style="left:2705px;top:1505px" width="20" height="28"><rect x="10.7" y="4" width="2.6" height="20" fill="#fff"/><path d="M6.2,9.6 L12.2,5.2" stroke="#fff" stroke-width="2.6" stroke-linecap="round"/></svg>
<div class="t" style="left:2737.5px;width:80px;text-align:center;top:1497.95px;font-size:29px;line-height:42px;color:#6c7a89">&rsaquo;</div>
<div class="t" style="left:2803px;width:80px;text-align:center;top:1497.95px;font-size:29px;line-height:42px;color:#6c7a89">&raquo;</div>
<div class="r" style="left:304px;top:135px;width:194px;height:135px;border:14px solid #ff2d6e;border-radius:8.5px;box-sizing:border-box"></div>
</body></html>
